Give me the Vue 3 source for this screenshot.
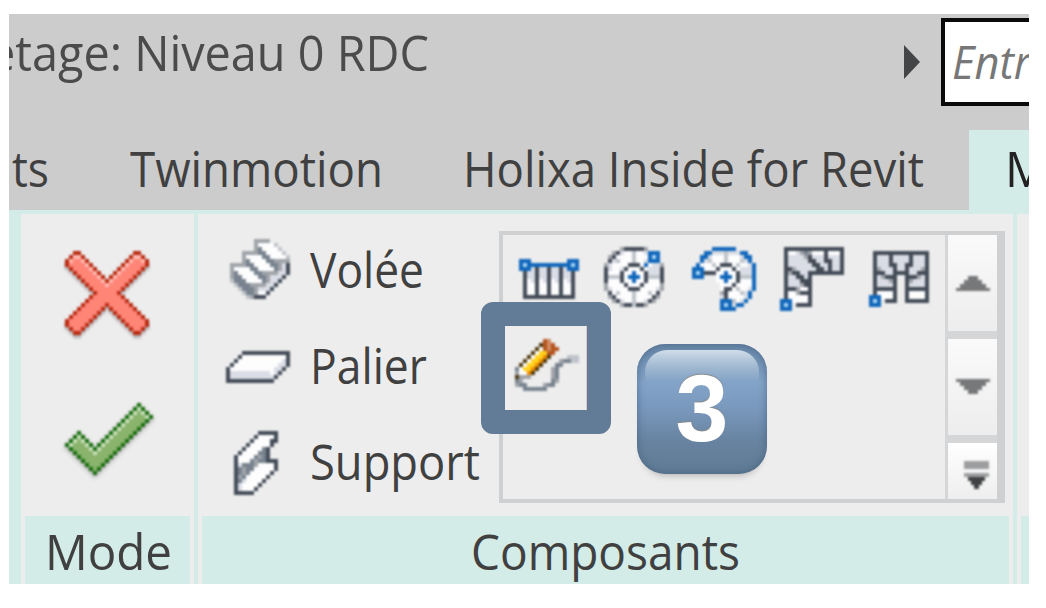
<script setup>
import { h } from 'vue'

const palette = {
  d: '#434b57', g: '#a0a4a9', l: '#bfc4ca', w: '#fdfdfe', s: '#78838f', p: '#dadde5',
  b: '#1167bb', c: '#a5d3f2', k: '#4f3a12', y: '#ffd21c', o: '#f08a00', r: '#b5561f', q: '#d08a62',
  R: '#b92b12', F: '#ff8577', H: '#ffb9b0', G: '#176f0e', E: '#8ab36c', L: '#cbe0bd'
}

const maps = {
  flight: [
    '......gggg.....', '......gwwwwl...', '......gswwwwl..', '...ggggsswwwwl.', '...gwwwwsswwwwl',
    '...gswwwwssgggg', 'ggggsswwwwssgpd', 'gwwwwsswwwwsgpd', 'gswwwwssggggppd', 'gsswwwwssgpppd.',
    'lssswwwwsgppd..', '.lsssggggppd...', '..lsssgpppd....', '...lssgwwd.....', '....lgddd......'
  ],
  landing: [
    '....dddddddddddd', '...dwwwwwwwwwwwd', '..dwwwwwwwwwwwpd', '.dwwwwwwwwwwwppd',
    'dwwwwwwwwwwwppd.', 'dppppppppppwpd..', 'dpppppppppppd...', 'dddddddddddd....'
  ],
  support: [
    '......ddddd', '.....dwwwwd', '....dwwwwdd', '...dwwwwwd.', '..dwwwwsd..', '.dwwwwssd..',
    'dwwwwsgsd..', 'dwwwsgssddd', 'dpsssgwwwwd', 'dsgsswwwwwd', 'dsgswwwwwd.', 'dgswwwwwd..',
    'dspwwwwd...', 'dpwwwwd....', 'dpwwwd.....', 'ddddd......'
  ],
  straight: [
    'bbb.........bbb', 'bcbbbbbbbbbbbcb', 'bbbpdppdppdpbbb', '.dppdppdppdppd.', '.dppdppdppdppd.',
    '.dwpdwpdwpdwpd.', '.dwwdwwdwwdwwd.', '.dwwdwwdwwdwwd.', '.dwwdwwdwwdwwd.', '.ddddddddddddd.'
  ],
  spiral: [
    '....gdddddg....', '..gdpwwlwwpbbb.', '.gdwwwwlwwwbcb.', '.dplwwwlwwpbbb.', 'gpwwwwdddwbwppg',
    'dpwwpdwwwdwpppd', 'dwwwdwwbwwdpppd', 'dllldwbbbwdllld', 'dwwwdwwbwwdwwwd', 'gwwwwdwwwdwwwwg',
    'gpwwwwdddwwwwpg', '.dwlwwwlwwwlwd.', '.gdwwwwlwwwwdg.', '..gdpwwlwwpdg..', '....gddlddg....'
  ],
  curved: [
    '.....bbbbbb.....', '...bbppplpppbb..', '..bbpwwwlwwwpbb.', '..bplwwwlwwwlpb.', '.bwwwlwdddwlwwpb',
    'bbbwwwdwwwdwpppb', 'bcbdddwwbwwdpppb', 'bbb...wbbbwdlllb', '......wwbwwdwwwb', '.......wwwdwwwwb',
    '.......wddwlwwpb', '.......gdwwwlpb.', '.......pdwwwwpb.', '.......bbblwpb..', '.......bcbpbb...',
    '.......bbbb.....'
  ],
  lwinder: [
    '.ddddddddddddddd', '.dwwpgsgwwwdwwwd', '.dppppgdpppdpppd', '.dpppppddppddppd', '.dppppppddppdppd',
    '.ddgpppppddpdppd', '.dgddppddddddddd', '.dppddpd........', '.dpppddd........', '.dpppgdd........',
    '.dddgwwd........', '.dwwgddd........', '.dwwwwwd........', 'bbbwwwwd........', 'bcb.dddd........',
    'bbb.............'
  ],
  uwinder: [
    '.dddddddddddddd', '.dpppdppppdpppd', '.dpppdppppdpppd', '.dpppddppddpppd', '.dgpppdppdpppgd',
    '.dddppddddppddd', '.dpgddd..dddgpd', '.dpppgd..dgpppd', '.dppppd..dppppd', '.dddddd..dddddd',
    '.dwwwwd..dwwwwd', 'bbbwwwd..dwwwwd', 'bcb.ddd..dddddd', 'bbb............'
  ],
  sketch: [
    '.......rq.......', '......krqr......', '.....kwrqrr.....', '....kwyyrr......', '...kwyyok....lll',
    '..kwyyok...gssll', '.kwyyok...ss....', 'swyyok...gs.....', 'gwwok....gs.....', 'kggg.....gs.....',
    'sg.......sg.....', 'gss....gss......', '..ssssss........'
  ]
}

// Builds an outlined shape with a light rim from an "is inside" test.
function outlined(w, hgt, inside, edge, fill, rim) {
  const isIn = (c, r) => c >= 0 && r >= 0 && c < w && r < hgt && inside(c, r)
  const isEdge = (c, r) => isIn(c, r) && !(isIn(c - 1, r) && isIn(c + 1, r) && isIn(c, r - 1) && isIn(c, r + 1))
  return Array.from({ length: hgt }, (_, r) =>
    Array.from({ length: w }, (_, c) => {
      if (!isIn(c, r)) return '.'
      if (isEdge(c, r)) return edge
      return isEdge(c, r - 1) && (edge === 'G' || r < 9) ? rim : fill
    }).join(''))
}
const arm = (c, r) => Math.abs(c - r) <= 3 && c + r >= 2 && c + r <= 38
maps.cancel = outlined(21, 21, (c, r) => arm(c, r) || arm(20 - c, r), 'R', 'F', 'H')
maps.confirm = outlined(22, 18, (c, r) => {
  const s = c + r
  const t = c - r
  return (s >= 18 && s <= 24 && t <= 18 && t >= -10) || (t >= -10 && t <= -4 && s >= 10 && s <= 24)
}, 'G', 'E', 'L')

const PixelIcon = ({ name, w, h: height, dx = 0, dy = 0 }) => {
  const rects = []
  maps[name].forEach((row, y) => {
    for (const m of row.matchAll(/([^.])\1*/g)) {
      rects.push(h('rect', { x: m.index * 4 + dx, y: y * 4 + dy, width: m[0].length * 4, height: 4, fill: palette[m[1]] }))
    }
  })
  return h('svg', { width: w, height, 'shape-rendering': 'crispEdges' }, rects)
}
PixelIcon.props = ['name', 'w', 'h', 'dx', 'dy']

const Label = ({ text, w, size = 50 }) =>
  h('svg', { width: w, height: 64 }, [
    h('text', { x: 0, y: 48.5, 'font-size': size, fill: 'currentColor', textLength: w, lengthAdjust: 'spacingAndGlyphs' }, text)
  ])
Label.props = ['text', 'w', 'size']

const components = [
  { text: 'Volée', w: 114, icon: 'flight', dx: 4, dy: 4 },
  { text: 'Palier', w: 117, icon: 'landing', dx: 0, dy: 20 },
  { text: 'Support', w: 170, icon: 'support', dx: 8, dy: 4 }
]
const gallery = [
  { icon: 'straight', dx: 3, dy: 12 },
  { icon: 'spiral', dx: 0, dy: 0 },
  { icon: 'curved', dx: 0, dy: 0 },
  { icon: 'lwinder', dx: 0, dy: 0 },
  { icon: 'uwinder', dx: 1, dy: 4 },
  { icon: 'sketch', dx: -1, dy: 4 }
]
</script>

<template>
  <div class="page">
    <div class="window">
      <header class="titlebar">
        <Label class="title" text="étage: Niveau 0 RDC" :w="440" />
        <svg class="expand" width="16" height="34"><path d="M0 0L16 17L0 34Z" fill="#434547" /></svg>
        <div class="search"><Label text="Entr" :w="79" :size="45" /></div>
      </header>
      <nav class="tabs">
        <Label class="tab-a" text="ts" :w="37" />
        <Label class="tab-b" text="Twinmotion" :w="253" />
        <Label class="tab-c" text="Holixa Inside for Revit" :w="461" />
        <div class="active"><Label text="M" :w="43" /></div>
      </nav>
      <main class="ribbon">
        <section class="panel mode">
          <div class="body">
            <PixelIcon class="soft cancel" name="cancel" :w="88" :h="88" />
            <PixelIcon class="soft confirm" name="confirm" :w="90" :h="76" />
          </div>
          <footer><Label text="Mode" :w="127" /></footer>
        </section>
        <section class="panel comps">
          <div class="body">
            <div class="list">
              <div v-for="c in components" :key="c.text" class="item">
                <PixelIcon class="soft" :name="c.icon" :w="72" :h="72" :dx="c.dx" :dy="c.dy" />
                <Label :text="c.text" :w="c.w" />
              </div>
            </div>
            <div class="gallery">
              <div class="grid">
                <PixelIcon v-for="g in gallery" :key="g.icon" class="soft" :name="g.icon" :w="68" :h="68" :dx="g.dx" :dy="g.dy" />
              </div>
              <div class="scroll">
                <div class="btn"><svg class="soft" width="34" height="16"><path d="M0 16V13H4V9H8V5H12V1H22V5H26V9H30V13H34V16Z" fill="#777879" /></svg></div>
                <div class="btn"><svg class="soft" width="34" height="16"><path d="M0 0V3H4V7H8V11H12V15H22V11H26V7H30V3H34V0Z" fill="#777879" /></svg></div>
                <div class="btn more">
                  <svg class="soft" width="26" height="28">
                    <path d="M0 0H25V8H0ZM0 12H25V16H0Z" fill="#9b9d9e" />
                    <path d="M4 16H21V20H18V24H15V28H10V24H7V20H4Z" fill="#404144" />
                  </svg>
                </div>
              </div>
              <div class="frame"></div>
              <div class="badge"><span>3</span></div>
            </div>
          </div>
          <footer><Label text="Composants" :w="269" /></footer>
        </section>
        <section class="panel next"><div class="body"></div><footer></footer></section>
      </main>
    </div>
  </div>
</template>

<style>
body { margin: 0; background: #fff; }
</style>
<style scoped>
.page { width: 1046px; height: 608px; padding: 14px 17px 24px 9px; box-sizing: border-box; background: #fff; overflow: hidden; }
.window { width: 1020px; height: 570px; overflow: hidden; background: #ccc; color: #404040; font-family: "Open Sans", "Noto Sans", sans-serif; }
svg { display: block; flex: none; overflow: visible; }
.soft { filter: blur(0.95px); }
.titlebar { display: flex; height: 116px; align-items: flex-start; }
.title { margin: 8px 0 0 -20px; color: #4b4b4b; }
.expand { margin: 31px 21px 0 auto; }
.search { box-sizing: border-box; width: 88px; height: 88px; margin-top: 4px; border: 4px solid #0a0a0a; border-right: 0; background: #fff; padding: 8px 0 0 7px; color: #777; font-style: italic; overflow: hidden; }
.tabs { display: flex; height: 80px; align-items: flex-start; }
.tabs > svg { margin-top: 8px; }
.tab-a { margin-left: 3px; }
.tab-b { margin-left: 81px; }
.tab-c { margin-left: 80px; }
.active { margin-left: auto; width: 60px; height: 80px; box-sizing: border-box; padding: 8px 0 0 36px; background: #d4ece7; color: #222; overflow: hidden; }
.ribbon { display: flex; gap: 4px; height: 374px; box-sizing: border-box; padding: 4px 0 0 12px; background: #d4ece7; }
.panel { display: flex; flex-direction: column; flex: none; background: #ededed; }
.panel .body { height: 302px; }
.panel footer { display: flex; justify-content: center; height: 68px; margin: 0 4px; background: #d4ece7; box-sizing: border-box; padding-top: 5px; }
.mode { width: 173px; }
.mode footer { padding-left: 2px; }
.next { width: 20px; }
.cancel { margin: 37px 0 0 44px; filter: blur(0.8px) drop-shadow(0 3px 1px #0004); }
.confirm { margin: 64px 0 0 44px; filter: blur(0.8px) drop-shadow(0 2px 2px #0005); }
.comps { width: 815px; }
.comps .body { display: flex; }
.list { width: 301px; padding-top: 9px; box-sizing: border-box; }
.item { display: flex; height: 96px; padding: 12px 0 0 28px; box-sizing: border-box; }
.item > svg + svg { margin: 4px 0 0 12px; }
.gallery { position: relative; display: flex; width: 506px; height: 272px; margin-top: 17px; box-sizing: border-box; border: 4px solid #cfd0d2; border-right-width: 8px; }
.grid { display: grid; width: 442px; padding: 12px 0 0 13px; box-sizing: border-box; grid-template-columns: repeat(5, 88px); grid-template-rows: 88px 88px; flex: none; }
.scroll { display: flex; flex-direction: column; gap: 8px; width: 52px; box-sizing: border-box; padding-left: 3px; background: #d4d6d7; }
.btn { display: flex; justify-content: center; align-items: center; height: 96px; background: linear-gradient(#fafafa, #ededed); }
.more { height: 56px; background: linear-gradient(#fff, #eee); padding-left: 8px; }
.more svg { margin-top: 8px; }
.frame { position: absolute; left: -22px; top: 67px; width: 130px; height: 132px; box-sizing: border-box; border: 24px solid #627b96; border-radius: 12px; box-shadow: inset -1px 0 #e5c8c0; }
.badge { position: absolute; left: 134px; top: 109px; width: 130px; height: 130px; border-radius: 28px; background: linear-gradient(#6787a9 0, #83a4c8 30%, #7898bc 50%, #6883a0 75%, #607b94 100%); box-shadow: inset 0 0 7px 1px #405a7890, 0 7px 9px -7px #0005; display: flex; justify-content: center; }
.badge::before { content: ""; position: absolute; left: 8px; right: 8px; top: 6px; height: 32px; border-radius: 22px 22px 4px 4px; background: linear-gradient(#d0deea, #83a4c800); }
.badge span { position: relative; margin-top: 10px; font: bold 95px/108px "Liberation Sans", Arial, sans-serif; color: #fff; text-shadow: 0 -1px 1px #8a8a8a; }
</style>
